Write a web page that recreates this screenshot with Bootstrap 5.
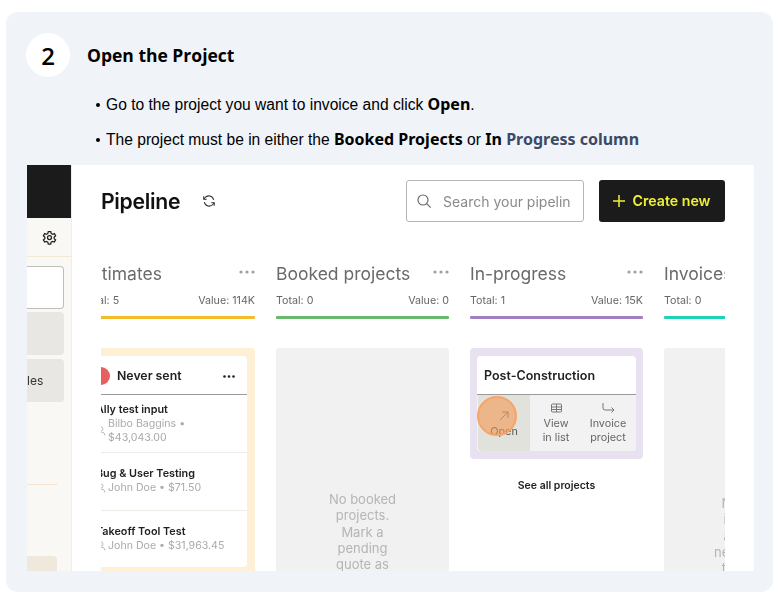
<!DOCTYPE html>
<html lang="en"><head><meta charset="utf-8"><title>Open the Project</title>
<link href="https://cdn.jsdelivr.net/npm/bootstrap@5.3.0/dist/css/bootstrap.min.css" rel="stylesheet">
<style>
html,body{height:100%;background:#fff;overflow:hidden}
.step-card{margin:12px 0 0 6px;width:767px;height:580px;background:#f0f3f8;border-radius:12px;padding:21px 19px 21px 21px}
.step-head{height:44px;margin-left:-1px}
.step-num{width:44px;height:44px;background:#fff;font:600 24px "Open Sans",sans-serif;color:#000}
.step-title{font:700 17.5px/1 "Open Sans",sans-serif;color:#000;margin:2px 0 0 17px}
.step-list{margin:16px 0 0 69px;font:15.6px/24px "Liberation Sans",sans-serif;color:#000;padding:0;list-style:none}
.step-list li{height:35px;display:flex;align-items:flex-start}
.step-list li::before{content:"";width:4px;height:4px;border-radius:50%;background:#000;margin:10px 6px 0 0;flex:none}
.step-list li span{white-space:pre-wrap}
.step-list b{font:700 16px "Noto Sans",sans-serif}
.step-list b.tone{color:#3c4a66}
.shot{width:727px;height:406px;background:#fff;margin-top:2px;font-family:Inter,sans-serif;filter:blur(.4px)}
.side{width:45px;background:#faf8f4;border-right:1px solid #f1ede4;flex:none}
.side-top{height:53px;background:#1c1b1b;flex:none}
.side-gear{height:39px;border-bottom:1px solid #f3e7d8;padding:0 14px 0 14px;flex:none}
.side-item{height:43px;width:37px;background:#e8e7e3;border-radius:0 4px 4px 0;margin-top:3px;font-size:12px;color:#333;padding-left:0;flex:none}
.side-item.outline{background:#fff;border:1px solid #bdbdb9;border-left:0;margin-top:9px}
.side-item.last{margin-top:4px}
.side-rule{width:30px;height:1px;background:#f5e3d0;margin-top:82px;flex:none}
.side-foot{width:30px;height:40px;background:#efe9dd;border-radius:0 4px 0 0;margin-top:71px;flex:none}
.pipe{padding:15px 29px 0 29px;min-width:0}
.pipe-head{height:42px}
.pipe-title{font:600 21.2px Inter,sans-serif;color:#111;letter-spacing:-.3px;margin:0}
.refresh{margin-left:22px}
.pipe-search{width:178px;height:42px;border:1px solid #b5b5b5;border-radius:3px;margin-left:auto;padding:0 13px 0 9px;color:#8a8a8a;font-size:14px;white-space:nowrap;overflow:hidden;gap:11px}
.pipe-create{width:126px;height:42px;background:#1c1b1b;color:#eef036;border:0;border-radius:3px;font-size:14.2px;font-weight:600;margin-left:15px;padding:0;gap:7px}
.board{overflow:hidden;margin-top:39px;height:310px}
.lane{width:173px;flex:none;margin-right:21px}
.lane:first-child{margin-left:-19px}
.lane-name{height:26px;color:#6a6a6a;font-size:17.5px;line-height:26px;white-space:nowrap}
.lane-dots{color:#a0a0a0;flex:none;margin-top:9px}
.lane-meta{font-size:10.7px;color:#666;height:15px;line-height:15px;margin-top:6px;white-space:nowrap}
.lane-bar{height:3px;margin-top:8px;border-radius:1px}
.lane-body{height:240px;margin-top:29px;border-radius:3px 3px 0 0}
.lane-body.fit{height:auto}
.amber{background:#f4bb2c}.green{background:#67ba6b}.purple{background:#a47fc2}.teal{background:#1fd3b5}
.body-amber{background:#fdf0d7;padding:8px 8px 0 7px}
.body-grey{background:#f1f1f1;text-align:center;color:#b5b5b5;font-size:13px;line-height:16.3px;padding-top:143px}
.body-grey.shift{padding-top:147px}
.quote{background:#fff;border-radius:4px;height:211px}
.quote-head{height:39px;border-bottom:1px solid #9a9a9a;padding:2px 12px 0 4px;font-size:12.3px;font-weight:600;color:#222}
.quote-dot{width:18px;height:18px;border-radius:50%;background:#e76060;margin-right:7px;margin-left:-1px;flex:none}
.quote-row{padding:14px 0 0 7px;border-bottom:1px solid #eeece6;font-size:10.6px;line-height:14px;color:#aaa;height:58px;white-space:nowrap;overflow:hidden}
.quote-row.tall{padding-top:8px}
.quote-row:last-child{border:0}
.quote-row b{display:block;color:#222;font-weight:600;font-size:10.8px}
.person{width:10px;height:10px;margin-right:2px;flex:none}
.body-lav{background:#e8e2f0;height:111px;padding:8px 7px;position:relative}
.proj{background:#fff;border-radius:4px;height:95px;overflow:hidden}
.proj-name{height:39px;border-bottom:1px solid #9a9a9a;padding:2px 0 0 7px;font-size:12.5px;font-weight:600;color:#222}
.proj-acts{background:#f2f2f2;height:56px}
.proj-act{width:52px;font-size:10.8px;line-height:13.5px;text-align:center;color:#666;padding-top:7px;flex:none}
.proj-act.on{background:#e2e2dd;border-radius:0 0 0 4px;margin-left:1px;padding-top:15px;color:#555}
.proj-act svg{display:block;margin:0 auto 3px}
.hotspot{position:absolute;left:7px;top:48px;width:40px;height:40px;border-radius:50%;background:rgba(244,148,78,.58);border:2px solid #f5a567}
.see-all{font-size:10.5px;font-weight:600;color:#222;text-align:center;margin-top:19px}
</style></head><body>
<div class="step-card">
  <div class="step-head d-flex align-items-center">
    <div class="step-num rounded-circle d-flex align-items-center justify-content-center">2</div>
    <div class="step-title">Open the Project</div>
  </div>
  <ul class="step-list">
    <li><span>Go to the project you want to invoice and click <b>Open</b>.</span></li>
    <li><span>The project must be in either the <b>Booked Projects</b> or <b>In</b> <b class="tone">Progress column</b></span></li>
  </ul>
  <div class="shot d-flex overflow-hidden">
    <div class="side d-flex flex-column">
      <div class="side-top"></div>
      <div class="side-gear d-flex align-items-center justify-content-end">
        <svg width="15" height="15" viewBox="0 0 24 24" fill="none" stroke="#222" stroke-width="2"><circle cx="12" cy="12" r="3.2"/><path d="M10 2.5h4l.6 3 2.3 1.3 2.9-1 2 3.4-2.3 2 0 2.6 2.3 2-2 3.4-2.9-1-2.3 1.3-.6 3h-4l-.6-3-2.3-1.3-2.9 1-2-3.4 2.3-2 0-2.6-2.3-2 2-3.4 2.9 1 2.3-1.3z"/></svg>
      </div>
      <div class="side-item outline"></div>
      <div class="side-item"></div>
      <div class="side-item last d-flex align-items-center">les</div>
      <div class="side-rule"></div>
      <div class="side-foot"></div>
    </div>
    <div class="pipe flex-grow-1">
      <div class="pipe-head d-flex align-items-center">
        <h1 class="pipe-title">Pipeline</h1>
        <svg class="refresh" width="14" height="14" viewBox="0 0 24 24" fill="none" stroke="#333" stroke-width="1.8"><path d="M20 10A8.5 8.5 0 0 0 5 6.5L3 9M4 14a8.5 8.5 0 0 0 15 3.5l2-2.5"/><path d="M3 4v5h5M21 20v-5h-5"/></svg>
        <div class="pipe-search d-flex align-items-center">
          <svg width="16" height="16" viewBox="0 0 24 24" fill="none" stroke="#666" stroke-width="1.7" class="flex-shrink-0"><circle cx="10.5" cy="10.5" r="7.5"/><path d="M16 16l6 6"/></svg>
          <span>Search your pipelin</span>
        </div>
        <button class="pipe-create d-flex align-items-center justify-content-center" type="button">
          <svg width="12" height="12" viewBox="0 0 12 12" stroke="#eef036" stroke-width="1.5"><path d="M6 0v12M0 6h12"/></svg>Create new
        </button>
      </div>
      <div class="board d-flex">
        <section class="lane">
          <div class="lane-name d-flex justify-content-between"><span>Estimates</span><svg class="lane-dots" width="16" height="4" viewBox="0 0 16 4" fill="currentColor"><circle cx="2" cy="2" r="1.6"/><circle cx="8" cy="2" r="1.6"/><circle cx="14" cy="2" r="1.6"/></svg></div>
          <div class="lane-meta d-flex justify-content-between"><span>Total: 5</span><span>Value: 114K</span></div>
          <div class="lane-bar amber"></div>
          <div class="lane-body body-amber">
            <div class="quote">
              <div class="quote-head d-flex align-items-center"><span class="quote-dot"></span>Never sent<svg class="ms-auto" width="12" height="3" viewBox="0 0 12 3" fill="#222"><circle cx="1.5" cy="1.5" r="1.3"/><circle cx="6" cy="1.500" r="1.3"/><circle cx="10.5" cy="1.5" r="1.3"/></svg></div>
              <div class="quote-row tall"><b>Ally test input</b><div class="d-flex align-items-center"><svg class="person" viewBox="0 0 10 10" fill="none" stroke="#bbb"><circle cx="5" cy="3" r="2"/><path d="M1 9.500q0-3.500 4-3.500t4 3.500"/></svg><div>Bilbo Baggins •<br>$43,043.00</div></div></div>
              <div class="quote-row"><b>Bug &amp; User Testing</b><div class="d-flex align-items-center"><svg class="person" viewBox="0 0 10 10" fill="none" stroke="#bbb"><circle cx="5" cy="3" r="2"/><path d="M1 9.500q0-3.500 4-3.500t4 3.500"/></svg><div>John Doe • $71.50</div></div></div>
              <div class="quote-row"><b>Takeoff Tool Test</b><div class="d-flex align-items-center"><svg class="person" viewBox="0 0 10 10" fill="none" stroke="#bbb"><circle cx="5" cy="3" r="2"/><path d="M1 9.500q0-3.500 4-3.500t4 3.500"/></svg><div>John Doe • $31,963.45</div></div></div>
            </div>
          </div>
        </section>
        <section class="lane">
          <div class="lane-name d-flex justify-content-between"><span>Booked projects</span><svg class="lane-dots" width="16" height="4" viewBox="0 0 16 4" fill="currentColor"><circle cx="2" cy="2" r="1.6"/><circle cx="8" cy="2" r="1.6"/><circle cx="14" cy="2" r="1.6"/></svg></div>
          <div class="lane-meta d-flex justify-content-between"><span>Total: 0</span><span>Value: 0</span></div>
          <div class="lane-bar green"></div>
          <div class="lane-body body-grey">No booked<br>projects.<br>Mark a<br>pending<br>quote as</div>
        </section>
        <section class="lane">
          <div class="lane-name d-flex justify-content-between"><span>In-progress</span><svg class="lane-dots" width="16" height="4" viewBox="0 0 16 4" fill="currentColor"><circle cx="2" cy="2" r="1.6"/><circle cx="8" cy="2" r="1.6"/><circle cx="14" cy="2" r="1.6"/></svg></div>
          <div class="lane-meta d-flex justify-content-between"><span>Total: 1</span><span>Value: 15K</span></div>
          <div class="lane-bar purple"></div>
          <div class="lane-body fit">
            <div class="body-lav rounded-1">
              <div class="proj">
                <div class="proj-name d-flex align-items-center">Post-Construction</div>
                <div class="proj-acts d-flex">
                  <div class="proj-act on"><svg width="12" height="12" viewBox="0 0 12 12" fill="none" stroke="#777"><path d="M2 10l8-8M4 2h6v6"/></svg>Open</div>
                  <div class="proj-act"><svg width="13" height="12" viewBox="0 0 13 12" fill="none" stroke="#777"><rect x="1.500" y="2" width="10" height="8" rx="1"/><path d="M1.500 5h10M1.500 7.500h10M6.500 2v8"/></svg>View<br>in list</div>
                  <div class="proj-act"><svg width="13" height="12" viewBox="0 0 13 12" fill="none" stroke="#777"><path d="M1 1v5q0 2 2 2h9M9.500 5.500L12 8l-2.500 2.500"/></svg>Invoice<br>project</div>
                </div>
              </div>
              <div class="hotspot"></div>
            </div>
            <div class="see-all">See all projects</div>
          </div>
        </section>
        <section class="lane">
          <div class="lane-name">Invoices sent</div>
          <div class="lane-meta"><span>Total: 0</span></div>
          <div class="lane-bar teal"></div>
          <div class="lane-body body-grey shift">No active<br>invoices.<br>a project<br>new invoice<br>to track it</div>
        </section>
      </div>
    </div>
  </div>
</div>
</body></html>
